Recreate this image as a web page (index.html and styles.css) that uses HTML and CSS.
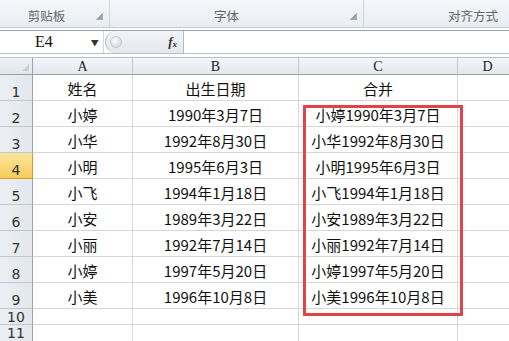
FILE: index.html
```html
<!DOCTYPE html>
<html>
<head>
<meta charset="utf-8">
<link rel="stylesheet" href="styles.css">
</head>
<body>
<div class="ribbon">
  <div class="group g1"><span class="glabel">剪贴板</span><span class="launcher"></span></div>
  <div class="group g2"><span class="glabel">字体</span><span class="launcher"></span></div>
  <div class="group g3"><span class="glabel">对齐方式</span></div>
</div>
<div class="fbar">
  <div class="namebox"><span class="ref">E4</span><span class="caret">▼</span></div>
  <div class="fxwrap"><span class="knob"></span><span class="fx">f<sub>x</sub></span></div>
  <div class="finput"></div>
</div>
<div class="sheet">
  <div class="grid">
    <div class="corner"><span class="tri"></span></div>
    <div class="ch">A</div><div class="ch">B</div><div class="ch">C</div><div class="ch last">D</div>

    <div class="rh">1</div><div class="c">姓名</div><div class="c">出生日期</div><div class="c">合并</div><div class="c"></div>
    <div class="rh">2</div><div class="c">小婷</div><div class="c">1990年3月7日</div><div class="c">小婷1990年3月7日</div><div class="c"></div>
    <div class="rh">3</div><div class="c">小华</div><div class="c">1992年8月30日</div><div class="c">小华1992年8月30日</div><div class="c"></div>
    <div class="rh sel">4</div><div class="c">小明</div><div class="c">1995年6月3日</div><div class="c">小明1995年6月3日</div><div class="c"></div>
    <div class="rh">5</div><div class="c">小飞</div><div class="c">1994年1月18日</div><div class="c">小飞1994年1月18日</div><div class="c"></div>
    <div class="rh">6</div><div class="c">小安</div><div class="c">1989年3月22日</div><div class="c">小安1989年3月22日</div><div class="c"></div>
    <div class="rh">7</div><div class="c">小丽</div><div class="c">1992年7月14日</div><div class="c">小丽1992年7月14日</div><div class="c"></div>
    <div class="rh">8</div><div class="c">小婷</div><div class="c">1997年5月20日</div><div class="c">小婷1997年5月20日</div><div class="c"></div>
    <div class="rh">9</div><div class="c">小美</div><div class="c">1996年10月8日</div><div class="c">小美1996年10月8日</div><div class="c"></div>
    <div class="rh short">10</div><div class="c"></div><div class="c"></div><div class="c"></div><div class="c"></div>
    <div class="rh short">11</div><div class="c"></div><div class="c"></div><div class="c"></div><div class="c"></div>
  </div>
  <div class="redbox"></div>
</div>
</body>
</html>
```

FILE: styles.css
```css
* { box-sizing: border-box; }
html, body { margin: 0; padding: 0; }
body {
  width: 509px;
  height: 341px;
  overflow: hidden;
  background: #fff;
  font-family: "Noto Sans CJK SC", "Noto Sans", sans-serif;
}

.ribbon {
  display: flex;
  height: 28px;
  background: linear-gradient(#f5f7fa, #e9edf2);
  border-bottom: 1px solid #c6ccd4;
}
.group {
  position: relative;
  display: flex;
  align-items: center;
  justify-content: center;
  border-right: 1px solid #cfd5dc;
  font-size: 12.5px;
  color: #666;
  padding-top: 4px;
}
.g1 { width: 110px; }
.g2 { width: 254px; }
.g3 { flex: 1; border-right: none; justify-content: flex-end; padding-right: 11px; }
.g1 .glabel { margin-left: -16px; }
.g2 .glabel { margin-left: -20px; }
.launcher {
  position: absolute;
  right: 6px;
  top: 13px;
  width: 7px;
  height: 7px;
  border: 1px solid #a6adb6;
  border-width: 0 1px 1px 0;
  background: linear-gradient(135deg, transparent 55%, #9aa2ac 56%);
}

.fbar {
  display: flex;
  height: 24px;
  margin-top: 2px;
  background: #fff;
  border-top: 1px solid #9aa4b0;
  border-bottom: 1px solid #b8bec6;
}
.namebox {
  width: 104px;
  display: flex;
  align-items: center;
  border-right: 1px solid #d4d8de;
}
.ref {
  font-family: "Liberation Serif", serif;
  font-size: 16px;
  color: #111;
  margin-left: 35px;
}
.caret {
  font-size: 8px;
  color: #333;
  margin-left: 38px;
}
.fxwrap {
  width: 78px;
  display: flex;
  align-items: center;
  justify-content: space-between;
  background: linear-gradient(#f2f4f7, #e4e8ee);
  border-radius: 11px 0 0 11px;
  border-left: 1px solid #b4bac2;
  margin-left: 1px;
  padding: 0 6px 0 4px;
}
.knob {
  width: 12px;
  height: 12px;
  border-radius: 50%;
  background: radial-gradient(circle at 40% 35%, #ffffff, #c9ced6);
  border: 1px solid #c3c8cf;
}
.fx {
  font-family: "Liberation Serif", serif;
  font-style: italic;
  font-weight: bold;
  font-size: 13px;
  color: #333;
}
.fx sub { font-size: 9px; vertical-align: -1px; }
.finput { flex: 1; border-left: 1px solid #b4bac2; }

.sheet {
  position: relative;
  margin-top: 3px;
  border-top: 1px solid #b8bec6;
}
.grid {
  display: grid;
  grid-template-columns: 33px 100px 166px 159px 60px;
  grid-template-rows: 17px repeat(9, 26px) 16px 17px;
}
.corner {
  background: linear-gradient(#eef1f5, #e2e6ec);
  border-right: 1px solid #9aa3ad;
  border-bottom: 1px solid #9aa3ad;
  position: relative;
}
.tri {
  position: absolute;
  right: 3px;
  bottom: 3px;
  width: 0;
  height: 0;
  border-left: 7px solid transparent;
  border-bottom: 7px solid #c9ced5;
}
.ch {
  background: linear-gradient(#f4f6f9, #e4e8ed);
  border-right: 1px solid #c2c7ce;
  border-bottom: 1px solid #9aa3ad;
  font-family: "Liberation Serif", serif;
  font-size: 14px;
  color: #222;
  display: flex;
  align-items: center;
  justify-content: center;
  line-height: 1;
  padding-top: 1px;
}
.rh {
  background: linear-gradient(90deg, #eceff3, #e3e7ec);
  border-right: 1px solid #9aa3ad;
  border-bottom: 1px solid #c2c7ce;
  font-family: "DejaVu Sans", sans-serif;
  font-size: 14px;
  color: #333;
  display: flex;
  align-items: flex-end;
  justify-content: center;
  padding-bottom: 1px;
  line-height: 1;
}
.rh.short { align-items: center; padding-bottom: 0; }
.rh.sel {
  background: linear-gradient(#fbe59d, #f6cd5c);
  border-right-color: #d49a2c;
  border-bottom-color: #d49a2c;
}
.c {
  border-right: 1px solid #d6d6d6;
  border-bottom: 1px solid #d6d6d6;
  font-size: 15px;
  color: #111;
  display: flex;
  align-items: center;
  justify-content: center;
  line-height: 1;
  padding-top: 2px;
  white-space: nowrap;
}

.redbox {
  position: absolute;
  left: 303px;
  top: 47px;
  width: 160px;
  height: 211px;
  border: 3px solid #e04448;
}
```
